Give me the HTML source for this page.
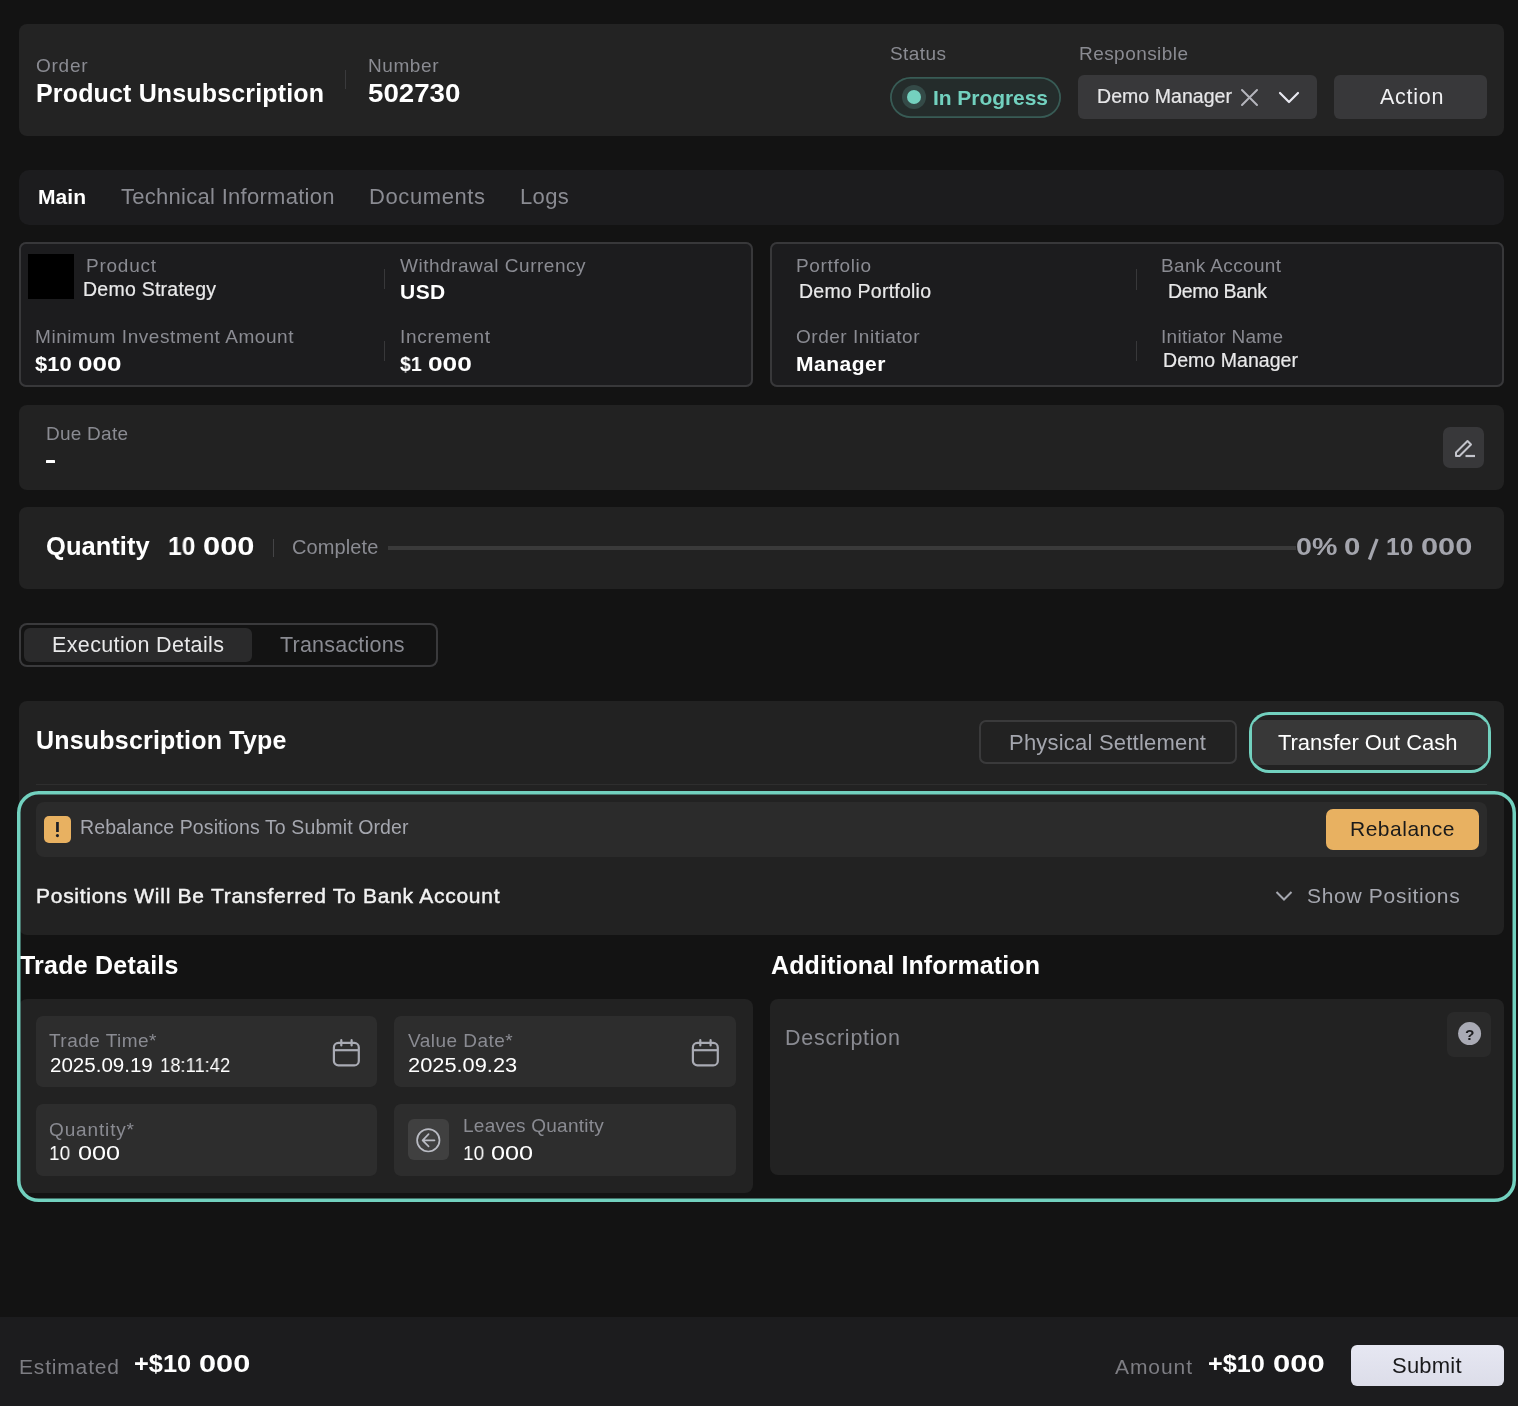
<!DOCTYPE html>
<html><head><meta charset="utf-8"><style>
html,body{margin:0;padding:0;}
body{width:1518px;height:1406px;background:#131313;position:relative;overflow:hidden;font-family:"Liberation Sans",sans-serif;}
.a{position:absolute;box-sizing:border-box;}
.t{position:absolute;white-space:nowrap;will-change:transform;}
</style></head><body>
<div class="a" style="left:19px;top:24px;width:1485px;height:112px;background:#232323;border-radius:8px;"></div>
<div class="t" style="left:36.00px;top:56.31px;font-size:19px;line-height:19px;color:#8a8b92;letter-spacing:0.739px;">Order</div>
<div class="t" style="left:36.00px;top:80.93px;font-size:25px;line-height:25px;color:#ffffff;font-weight:700;letter-spacing:0.155px;">Product Unsubscription</div>
<div class="a" style="left:345px;top:70px;width:1px;height:19px;background:#3a3a3c;"></div>
<div class="t" style="left:367.60px;top:56.31px;font-size:19px;line-height:19px;color:#8a8b92;letter-spacing:0.581px;">Number</div>
<div class="t" style="left:367.60px;top:80.93px;font-size:25px;line-height:25px;color:#ffffff;transform:scaleX(1.1074);transform-origin:0 0;font-weight:700;">502730</div>
<div class="t" style="left:890.00px;top:44.21px;font-size:19px;line-height:19px;color:#8a8b92;letter-spacing:0.427px;">Status</div>
<div class="a" style="left:890px;top:77px;width:171px;height:41px;background:#242c2b;border-radius:20.5px;box-shadow:inset 0 0 0 1.8px #385b55;"></div>
<div class="a" style="left:902px;top:84.5px;width:24px;height:24.0px;background:#344a47;border-radius:12px;"></div>
<div class="a" style="left:907px;top:89.5px;width:14px;height:14.0px;background:#74d1bf;border-radius:7px;"></div>
<div class="t" style="left:933.00px;top:87.02px;font-size:21px;line-height:21px;color:#72d1bf;font-weight:700;letter-spacing:-0.055px;">In Progress</div>
<div class="t" style="left:1078.50px;top:44.21px;font-size:19px;line-height:19px;color:#8a8b92;letter-spacing:0.445px;">Responsible</div>
<div class="a" style="left:1078px;top:75px;width:239px;height:44px;background:#38383a;border-radius:6px;"></div>
<div class="t" style="left:1096.70px;top:86.99px;font-size:19.5px;line-height:19.5px;color:#e6e6e8;letter-spacing:0.054px;-webkit-text-stroke:0.2px #e6e6e8;">Demo Manager</div>
<svg class="a" style="left:1239.5px;top:87.5px;" width="19" height="19" viewBox="0 0 19 19"><path d="M2 2L17 17M17 2L2 17" stroke="#b4b5bc" stroke-width="2" stroke-linecap="round" fill="none"/></svg>
<svg class="a" style="left:1277.5px;top:90px;" width="22" height="14" viewBox="0 0 22 14"><path d="M2 3L11 12L20 3" stroke="#e8e8f0" stroke-width="2.2" stroke-linecap="round" stroke-linejoin="round" fill="none"/></svg>
<div class="a" style="left:1334px;top:75px;width:153px;height:44px;background:#38383a;border-radius:6px;"></div>
<div class="t" style="left:1379.50px;top:86.80px;font-size:21.5px;line-height:21.5px;color:#f0f0f2;letter-spacing:0.746px;">Action</div>
<div class="a" style="left:19px;top:170px;width:1485px;height:55px;background:#1c1c1e;border-radius:10px;"></div>
<div class="t" style="left:38.00px;top:186.12px;font-size:21px;line-height:21px;color:#ffffff;font-weight:700;letter-spacing:0.057px;">Main</div>
<div class="t" style="left:120.50px;top:185.77px;font-size:22px;line-height:22px;color:#8a8b92;letter-spacing:0.280px;">Technical Information</div>
<div class="t" style="left:369.00px;top:185.77px;font-size:22px;line-height:22px;color:#8a8b92;letter-spacing:0.592px;">Documents</div>
<div class="t" style="left:520.00px;top:185.77px;font-size:22px;line-height:22px;color:#8a8b92;letter-spacing:0.338px;">Logs</div>
<div class="a" style="left:19px;top:242px;width:734px;height:145px;background:#1c1c1e;border-radius:7px;box-shadow:inset 0 0 0 2px #38383a;"></div>
<div class="a" style="left:28px;top:254px;width:46px;height:45px;background:#000000;"></div>
<div class="t" style="left:85.75px;top:256.21px;font-size:19px;line-height:19px;color:#8a8b92;letter-spacing:0.750px;">Product</div>
<div class="t" style="left:83.25px;top:279.79px;font-size:19.5px;line-height:19.5px;color:#e9e9ea;letter-spacing:0.245px;-webkit-text-stroke:0.2px #e9e9ea;">Demo Strategy</div>
<div class="a" style="left:384px;top:269px;width:1px;height:20px;background:#38383a;"></div>
<div class="a" style="left:384px;top:341px;width:1px;height:20px;background:#38383a;"></div>
<div class="t" style="left:399.50px;top:256.21px;font-size:19px;line-height:19px;color:#8a8b92;letter-spacing:0.510px;">Withdrawal Currency</div>
<div class="t" style="left:399.50px;top:281.32px;font-size:21px;line-height:21px;color:#ffffff;font-weight:700;letter-spacing:0.469px;">USD</div>
<div class="t" style="left:34.50px;top:327.11px;font-size:19px;line-height:19px;color:#8a8b92;letter-spacing:0.562px;">Minimum Investment Amount</div>
<div class="t" style="left:34.60px;top:352.92px;font-size:21px;line-height:21px;color:#ffffff;transform:scaleX(1.0452);transform-origin:0 0;font-weight:700;">$10</div>
<div class="t" style="left:77.80px;top:352.92px;font-size:21px;line-height:21px;color:#ffffff;transform:scaleX(1.2394);transform-origin:0 0;font-weight:700;">000</div>
<div class="t" style="left:399.50px;top:327.31px;font-size:19px;line-height:19px;color:#8a8b92;letter-spacing:0.687px;">Increment</div>
<div class="t" style="left:399.60px;top:353.22px;font-size:21px;line-height:21px;color:#ffffff;transform:scaleX(0.9288);transform-origin:0 0;font-weight:700;">$1</div>
<div class="t" style="left:428.20px;top:353.22px;font-size:21px;line-height:21px;color:#ffffff;transform:scaleX(1.2508);transform-origin:0 0;font-weight:700;">000</div>
<div class="a" style="left:770px;top:242px;width:734px;height:145px;background:#1c1c1e;border-radius:7px;box-shadow:inset 0 0 0 2px #38383a;"></div>
<div class="t" style="left:796.00px;top:256.21px;font-size:19px;line-height:19px;color:#8a8b92;letter-spacing:0.665px;">Portfolio</div>
<div class="t" style="left:799.00px;top:282.29px;font-size:19.5px;line-height:19.5px;color:#e9e9ea;letter-spacing:0.231px;-webkit-text-stroke:0.2px #e9e9ea;">Demo Portfolio</div>
<div class="a" style="left:1135.5px;top:269px;width:1.0px;height:21px;background:#38383a;"></div>
<div class="a" style="left:1135.5px;top:341px;width:1.0px;height:20px;background:#38383a;"></div>
<div class="t" style="left:1161.25px;top:256.21px;font-size:19px;line-height:19px;color:#8a8b92;letter-spacing:0.347px;">Bank Account</div>
<div class="t" style="left:1167.50px;top:282.29px;font-size:19.5px;line-height:19.5px;color:#e9e9ea;letter-spacing:-0.367px;-webkit-text-stroke:0.2px #e9e9ea;">Demo Bank</div>
<div class="t" style="left:796.00px;top:327.41px;font-size:19px;line-height:19px;color:#8a8b92;letter-spacing:0.526px;">Order Initiator</div>
<div class="t" style="left:796.00px;top:353.22px;font-size:21px;line-height:21px;color:#ffffff;font-weight:700;letter-spacing:0.523px;">Manager</div>
<div class="t" style="left:1161.00px;top:327.41px;font-size:19px;line-height:19px;color:#8a8b92;letter-spacing:0.287px;">Initiator Name</div>
<div class="t" style="left:1162.50px;top:351.09px;font-size:19.5px;line-height:19.5px;color:#e9e9ea;letter-spacing:0.054px;-webkit-text-stroke:0.2px #e9e9ea;">Demo Manager</div>
<div class="a" style="left:19px;top:405px;width:1485px;height:85px;background:#222222;border-radius:8px;"></div>
<div class="t" style="left:46.00px;top:424.41px;font-size:19px;line-height:19px;color:#8a8b92;letter-spacing:0.246px;">Due Date</div>
<div class="a" style="left:46px;top:459.5px;width:9px;height:3.6999999999999886px;background:#ffffff;border-radius:0.5px;"></div>
<div class="a" style="left:1443px;top:427px;width:41px;height:41px;background:#38383a;border-radius:7px;"></div>
<svg class="a" style="left:1452px;top:437px;" width="26" height="22" viewBox="0 0 26 22"><path d="M4 15.5L15.5 4L19 7.5L7.5 19H4Z" stroke="#c3c4cb" stroke-width="2" fill="none" stroke-linejoin="round"/><path d="M13.5 19H23" stroke="#c3c4cb" stroke-width="2.2"/></svg>
<div class="a" style="left:19px;top:507px;width:1485px;height:82px;background:#222222;border-radius:8px;"></div>
<div class="t" style="left:46.00px;top:534.41px;font-size:25.5px;line-height:25.5px;color:#ffffff;font-weight:700;letter-spacing:0.042px;">Quantity</div>
<div class="t" style="left:167.60px;top:534.41px;font-size:25.5px;line-height:25.5px;color:#ffffff;transform:scaleX(0.9623);transform-origin:0 0;font-weight:700;">10</div>
<div class="t" style="left:203.10px;top:534.41px;font-size:25.5px;line-height:25.5px;color:#ffffff;transform:scaleX(1.2088);transform-origin:0 0;font-weight:700;">000</div>
<div class="a" style="left:273px;top:539px;width:1px;height:18px;background:#444446;"></div>
<div class="t" style="left:292.00px;top:536.57px;font-size:20px;line-height:20px;color:#8a8b92;letter-spacing:0.114px;">Complete</div>
<div class="a" style="left:388px;top:546px;width:908px;height:4px;background:#3a3a3a;"></div>
<svg class="a" style="left:1364px;top:536px;" width="18" height="27" viewBox="0 0 18 27"><path d="M5.4 23.6L13.1 3" stroke="#a4a5ad" stroke-width="3.2"/></svg>
<div class="t" style="left:1295.60px;top:534.56px;font-size:24.5px;line-height:24.5px;color:#a4a5ad;transform:scaleX(1.1666);transform-origin:0 0;font-weight:700;">0%</div>
<div class="t" style="left:1344.40px;top:534.56px;font-size:24.5px;line-height:24.5px;color:#a4a5ad;transform:scaleX(1.1987);transform-origin:0 0;font-weight:700;">0</div>
<div class="t" style="left:1385.70px;top:534.56px;font-size:24.5px;line-height:24.5px;color:#a4a5ad;transform:scaleX(0.9906);transform-origin:0 0;font-weight:700;">10</div>
<div class="t" style="left:1420.80px;top:534.56px;font-size:24.5px;line-height:24.5px;color:#a4a5ad;transform:scaleX(1.2557);transform-origin:0 0;font-weight:700;">000</div>
<div class="a" style="left:19px;top:623px;width:419px;height:44px;background:#131313;border-radius:8px;box-shadow:inset 0 0 0 2px #3a3a3c;"></div>
<div class="a" style="left:24px;top:628px;width:228px;height:34px;background:#2a2a2b;border-radius:6px;"></div>
<div class="t" style="left:52.00px;top:635.10px;font-size:21.5px;line-height:21.5px;color:#e9e9ea;letter-spacing:0.366px;">Execution Details</div>
<div class="t" style="left:279.60px;top:635.10px;font-size:21.5px;line-height:21.5px;color:#8a8b92;letter-spacing:0.211px;">Transactions</div>
<div class="a" style="left:19px;top:701px;width:1485px;height:234px;background:#222222;border-radius:8px;"></div>
<div class="t" style="left:36.30px;top:727.83px;font-size:25px;line-height:25px;color:#ffffff;font-weight:700;letter-spacing:0.205px;">Unsubscription Type</div>
<div class="a" style="left:979px;top:720px;width:258px;height:44px;background:#222222;border-radius:7px;box-shadow:inset 0 0 0 2px #3a3a3b;"></div>
<div class="t" style="left:1009.00px;top:732.07px;font-size:22px;line-height:22px;color:#a4a6ae;letter-spacing:0.210px;">Physical Settlement</div>
<div class="a" style="left:1248.5px;top:712.2px;width:242.5px;height:60.5px;border-radius:20px;box-shadow:inset 0 0 0 3px #72d1bf;"></div>
<div class="a" style="left:1252px;top:720px;width:235.5px;height:44.5px;background:#383838;border-radius:8px;"></div>
<div class="t" style="left:1278.00px;top:732.07px;font-size:22px;line-height:22px;color:#ffffff;letter-spacing:-0.045px;">Transfer Out Cash</div>
<div class="a" style="left:36px;top:783.5px;width:1451px;height:1.0px;background:#2e2e2e;"></div>
<div class="a" style="left:36px;top:802px;width:1451px;height:55px;background:#2b2b2b;border-radius:8px;"></div>
<div class="a" style="left:44px;top:816px;width:27px;height:27px;background:#e8b161;border-radius:5px;"></div>
<svg class="a" style="left:44px;top:816px;" width="27" height="27" viewBox="0 0 27 27"><rect x="12.1" y="6" width="2.7" height="10" fill="#1c1f27"/><circle cx="13.45" cy="19.6" r="1.55" fill="#1c1f27"/></svg>
<div class="t" style="left:80.30px;top:817.79px;font-size:19.5px;line-height:19.5px;color:#a5a7af;letter-spacing:0.108px;">Rebalance Positions To Submit Order</div>
<div class="a" style="left:1326px;top:809px;width:153px;height:41px;background:#e8b161;border-radius:7px;"></div>
<div class="t" style="left:1350.30px;top:818.32px;font-size:21px;line-height:21px;color:#1a1a1a;letter-spacing:0.508px;">Rebalance</div>
<div class="t" style="left:36.00px;top:885.22px;font-size:21px;line-height:21px;color:#f2f2f2;letter-spacing:0.727px;-webkit-text-stroke:0.45px #f2f2f2;">Positions Will Be Transferred To Bank Account</div>
<svg class="a" style="left:1274px;top:889px;" width="20" height="14" viewBox="0 0 20 14"><path d="M2.5 3L10 10.5L17.5 3" stroke="#a5a7af" stroke-width="2" fill="none"/></svg>
<div class="t" style="left:1306.50px;top:885.22px;font-size:21px;line-height:21px;color:#a5a7af;letter-spacing:0.701px;">Show Positions</div>
<div class="t" style="left:20.40px;top:952.83px;font-size:25px;line-height:25px;color:#ffffff;font-weight:700;letter-spacing:0.231px;">Trade Details</div>
<div class="t" style="left:770.90px;top:952.83px;font-size:25px;line-height:25px;color:#ffffff;font-weight:700;letter-spacing:0.113px;">Additional Information</div>
<div class="a" style="left:19px;top:999px;width:734px;height:194px;background:#222222;border-radius:8px;"></div>
<div class="a" style="left:36px;top:1016px;width:341px;height:71px;background:#2d2d2d;border-radius:7px;"></div>
<div class="t" style="left:49.40px;top:1031.11px;font-size:19px;line-height:19px;color:#8a8b92;letter-spacing:0.471px;">Trade Time*</div>
<div class="t" style="left:49.80px;top:1054.74px;font-size:20.5px;line-height:20.5px;color:#ffffff;transform:scaleX(1.0019);transform-origin:0 0;">2025.09.19</div>
<div class="t" style="left:159.50px;top:1054.74px;font-size:20.5px;line-height:20.5px;color:#ffffff;transform:scaleX(0.8957);transform-origin:0 0;">18:11:42</div>
<svg class="a" style="left:330px;top:1037px;" width="32" height="32" viewBox="0 0 32 32"><rect x="3.9" y="5.9" width="24.9" height="22.5" rx="4.5" stroke="#a9abb4" stroke-width="2.2" fill="none"/><path d="M3.9 13.2H28.8" stroke="#a9abb4" stroke-width="2.2"/><path d="M11.3 3.2V8.5M21.6 3.2V8.5" stroke="#a9abb4" stroke-width="2.2" stroke-linecap="round"/></svg>
<div class="a" style="left:394px;top:1016px;width:342px;height:71px;background:#2d2d2d;border-radius:7px;"></div>
<div class="t" style="left:408.00px;top:1031.41px;font-size:19px;line-height:19px;color:#8a8b92;letter-spacing:0.471px;">Value Date*</div>
<div class="t" style="left:408.00px;top:1054.84px;font-size:20.5px;line-height:20.5px;color:#ffffff;transform:scaleX(1.0643);transform-origin:0 0;">2025.09.23</div>
<svg class="a" style="left:689.2px;top:1037.3px;" width="32" height="32" viewBox="0 0 32 32"><rect x="3.9" y="5.9" width="24.9" height="22.5" rx="4.5" stroke="#a9abb4" stroke-width="2.2" fill="none"/><path d="M3.9 13.2H28.8" stroke="#a9abb4" stroke-width="2.2"/><path d="M11.3 3.2V8.5M21.6 3.2V8.5" stroke="#a9abb4" stroke-width="2.2" stroke-linecap="round"/></svg>
<div class="a" style="left:36px;top:1104px;width:341px;height:72px;background:#2d2d2d;border-radius:7px;"></div>
<div class="t" style="left:49.40px;top:1119.91px;font-size:19px;line-height:19px;color:#8a8b92;letter-spacing:0.858px;">Quantity*</div>
<div class="t" style="left:49.40px;top:1142.94px;font-size:20.5px;line-height:20.5px;color:#ffffff;transform:scaleX(0.9252);transform-origin:0 0;">10</div>
<div class="t" style="left:77.90px;top:1142.94px;font-size:20.5px;line-height:20.5px;color:#ffffff;transform:scaleX(1.2316);transform-origin:0 0;">000</div>
<div class="a" style="left:394px;top:1104px;width:342px;height:72px;background:#2d2d2d;border-radius:7px;"></div>
<div class="a" style="left:408px;top:1119px;width:41px;height:41px;background:#404040;border-radius:6px;"></div>
<svg class="a" style="left:413px;top:1125px;" width="30" height="30" viewBox="0 0 30 30"><circle cx="15.3" cy="15.3" r="11.2" stroke="#b9bbc3" stroke-width="1.7" fill="none"/><path d="M21.5 15.3H9.8M15.6 9.2L9.6 15.3L15.6 21.4" stroke="#b9bbc3" stroke-width="1.7" stroke-linecap="round" stroke-linejoin="round" fill="none"/></svg>
<div class="t" style="left:462.80px;top:1116.11px;font-size:19px;line-height:19px;color:#8a8b92;letter-spacing:0.248px;">Leaves Quantity</div>
<div class="t" style="left:462.80px;top:1142.64px;font-size:20.5px;line-height:20.5px;color:#ffffff;transform:scaleX(0.9252);transform-origin:0 0;">10</div>
<div class="t" style="left:491.30px;top:1142.64px;font-size:20.5px;line-height:20.5px;color:#ffffff;transform:scaleX(1.2316);transform-origin:0 0;">000</div>
<div class="a" style="left:770px;top:999px;width:734px;height:176px;background:#222222;border-radius:8px;"></div>
<div class="t" style="left:785.00px;top:1027.60px;font-size:21.5px;line-height:21.5px;color:#8a8b92;letter-spacing:0.745px;">Description</div>
<div class="a" style="left:1447px;top:1012px;width:44px;height:45px;background:#2a2a2a;border-radius:7px;"></div>
<svg class="a" style="left:1457px;top:1022px;" width="26" height="24" viewBox="0 0 26 24"><circle cx="12.6" cy="11.6" r="11.5" fill="#a9aab4"/></svg>
<div class="t" style="left:1465.30px;top:1026.68px;font-size:15.5px;line-height:15.5px;color:#1c1c1e;font-weight:700;">?</div>
<svg class="a" style="left:15px;top:789px;" width="1503" height="416" viewBox="0 0 1503 416"><rect x="3.75" y="3.75" width="1495.5" height="407.5" rx="20" ry="20" stroke="#72d1bf" stroke-width="3.5" fill="none"/></svg>
<div class="a" style="left:0px;top:1317px;width:1518px;height:89px;background:#1c1c1e;"></div>
<div class="t" style="left:19.40px;top:1355.62px;font-size:21px;line-height:21px;color:#7d7d83;letter-spacing:0.825px;">Estimated</div>
<div class="t" style="left:133.80px;top:1352.46px;font-size:24.5px;line-height:24.5px;color:#ffffff;transform:scaleX(1.0365);transform-origin:0 0;font-weight:700;">+$10</div>
<div class="t" style="left:199.30px;top:1352.46px;font-size:24.5px;line-height:24.5px;color:#ffffff;transform:scaleX(1.2533);transform-origin:0 0;font-weight:700;">000</div>
<div class="t" style="left:1115.10px;top:1355.62px;font-size:21px;line-height:21px;color:#7d7d83;letter-spacing:0.921px;">Amount</div>
<div class="t" style="left:1207.80px;top:1352.46px;font-size:24.5px;line-height:24.5px;color:#ffffff;transform:scaleX(1.0292);transform-origin:0 0;font-weight:700;">+$10</div>
<div class="t" style="left:1272.90px;top:1352.46px;font-size:24.5px;line-height:24.5px;color:#ffffff;transform:scaleX(1.2630);transform-origin:0 0;font-weight:700;">000</div>
<div class="a" style="left:1351px;top:1345px;width:153px;height:41px;background:linear-gradient(#e6e7f2,#dcdde9);border-radius:6px;"></div>
<div class="t" style="left:1392.40px;top:1354.87px;font-size:22px;line-height:22px;color:#1a1a1c;letter-spacing:0.225px;">Submit</div>
</body></html>
